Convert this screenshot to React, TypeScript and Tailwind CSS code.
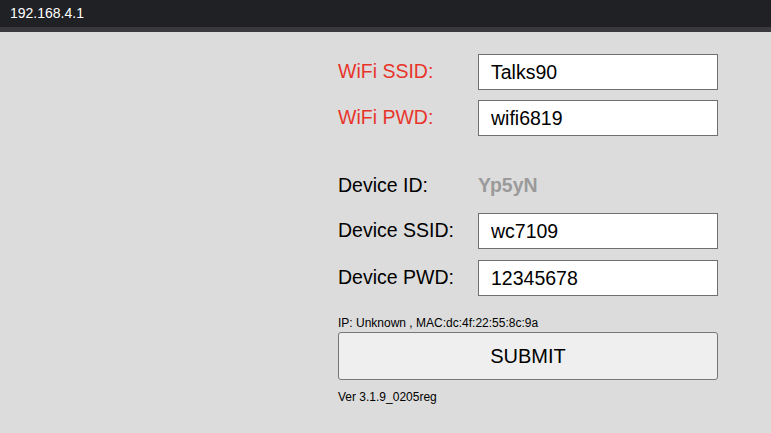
import React from "react";

const WIFI = [
  { label: "WiFi SSID:", value: "Talks90", mt: "mt-[22px]" },
  { label: "WiFi PWD:", value: "wifi6819", mt: "mt-[10px]" },
];

const DEVICE = [
  { label: "Device SSID:", value: "wc7109", mt: "mt-[9px]" },
  { label: "Device PWD:", value: "12345678", mt: "mt-[11px]" },
];

function Field({ label, value, red, mt }: { label: string; value: string; red?: boolean; mt: string }) {
  return (
    <div className={`flex items-center h-[36px] ${mt}`}>
      <label className={`w-[140px] shrink-0 text-[19.5px] ${red ? "text-[#e8352b]" : "text-black"}`}>{label}</label>
      <input
        defaultValue={value}
        className="w-[240px] h-[36px] bg-white border border-[#6f6f6f] px-[12px] text-[19.5px] text-black outline-none"
      />
    </div>
  );
}

export default function App() {
  return (
    <div className="w-[771px] h-[433px] bg-[#dcdcdc] overflow-hidden" style={{ fontFamily: '"Liberation Sans", Arial, sans-serif' }}>
      {/* browser title strip */}
      <div className="h-[27px] bg-[#202124] flex items-center px-[10px]">
        <span className="text-[14px] font-medium text-white">192.168.4.1</span>
      </div>
      <div className="h-[5px] bg-[#3a3a3e]" />

      <div className="pl-[338px] flex flex-col">
        {WIFI.map((f) => (
          <Field key={f.label} label={f.label} value={f.value} red mt={f.mt} />
        ))}

        <div className="flex items-center h-[36px] mt-[32px]">
          <span className="w-[140px] shrink-0 text-[19.5px] text-black">Device ID:</span>
          <span className="text-[19.5px] font-bold text-[#9a9a9a]">Yp5yN</span>
        </div>

        {DEVICE.map((f) => (
          <Field key={f.label} label={f.label} value={f.value} mt={f.mt} />
        ))}

        <p className="mt-[20px] text-[12px] leading-[14px] text-black">IP: Unknown , MAC:dc:4f:22:55:8c:9a</p>
        <button className="mt-[2px] w-[380px] h-[48px] bg-[#efefef] border border-[#767676] rounded-[3px] text-[20px] text-black">
          SUBMIT
        </button>
        <p className="mt-[10px] text-[12px] leading-[14px] text-black">Ver 3.1.9_0205reg</p>
      </div>
    </div>
  );
}
